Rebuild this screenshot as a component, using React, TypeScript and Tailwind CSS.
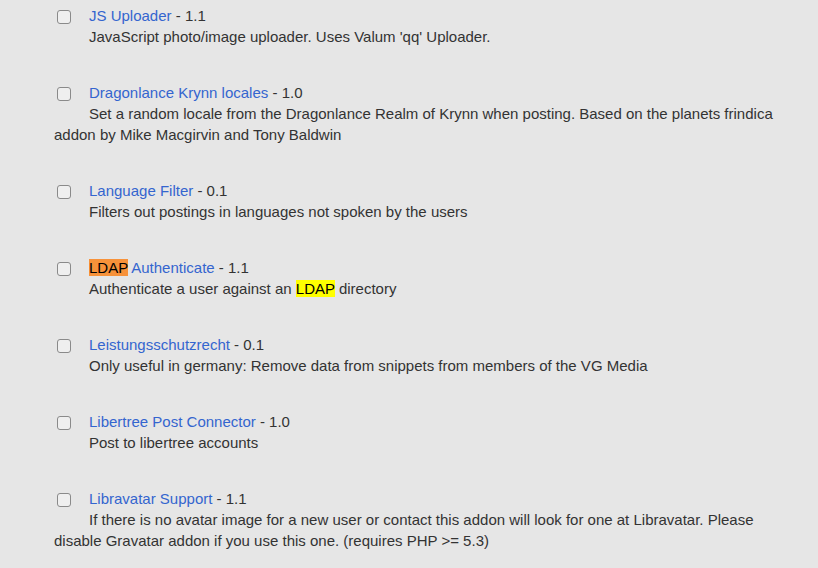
import React from "react";

type Item = { name: React.ReactNode; version: string; desc: React.ReactNode };

const items: Item[] = [
  { name: <a className="text-[#3465cf]">JS Uploader</a>, version: "1.1", desc: "JavaScript photo/image uploader. Uses Valum 'qq' Uploader." },
  {
    name: <a className="text-[#3465cf]">Dragonlance Krynn locales</a>,
    version: "1.0",
    desc: "Set a random locale from the Dragonlance Realm of Krynn when posting. Based on the planets frindica addon by Mike Macgirvin and Tony Baldwin",
  },
  { name: <a className="text-[#3465cf]">Language Filter</a>, version: "0.1", desc: "Filters out postings in languages not spoken by the users" },
  {
    name: (
      <>
        <span className="bg-[#f7923a] text-black">LDAP</span>
        <a className="text-[#3465cf]"> Authenticate</a>
      </>
    ),
    version: "1.1",
    desc: (
      <>
        Authenticate a user against an <span className="bg-[#ffff00] text-black">LDAP</span> directory
      </>
    ),
  },
  { name: <a className="text-[#3465cf]">Leistungsschutzrecht</a>, version: "0.1", desc: "Only useful in germany: Remove data from snippets from members of the VG Media" },
  { name: <a className="text-[#3465cf]">Libertree Post Connector</a>, version: "1.0", desc: "Post to libertree accounts" },
  {
    name: <a className="text-[#3465cf]">Libravatar Support</a>,
    version: "1.1",
    desc: "If there is no avatar image for a new user or contact this addon will look for one at Libravatar. Please disable Gravatar addon if you use this one. (requires PHP >= 5.3)",
  },
];

export default function App() {
  return (
    <div className="w-[818px] h-[568px] overflow-hidden bg-[#e6e6e6] text-[#333333] text-[15px]" style={{ fontFamily: '"Liberation Sans", Arial, sans-serif' }}>
      <div className="pl-[54px] pt-[5px] w-[792px]">
        {items.map((it, i) => (
          <div key={i} className="mb-[35px]">
            <div className="flex items-center h-[21px]">
              <span className="ml-[3px] mr-[18px] mt-[2px] w-[14px] h-[14px] rounded-[3px] border border-[#8a8a8a] bg-[#efefef] shrink-0" />
              <span className="leading-[21px]">
                {it.name} - {it.version}
              </span>
            </div>
            <div className="indent-[35px] leading-[21px]">{it.desc}</div>
          </div>
        ))}
      </div>
    </div>
  );
}
